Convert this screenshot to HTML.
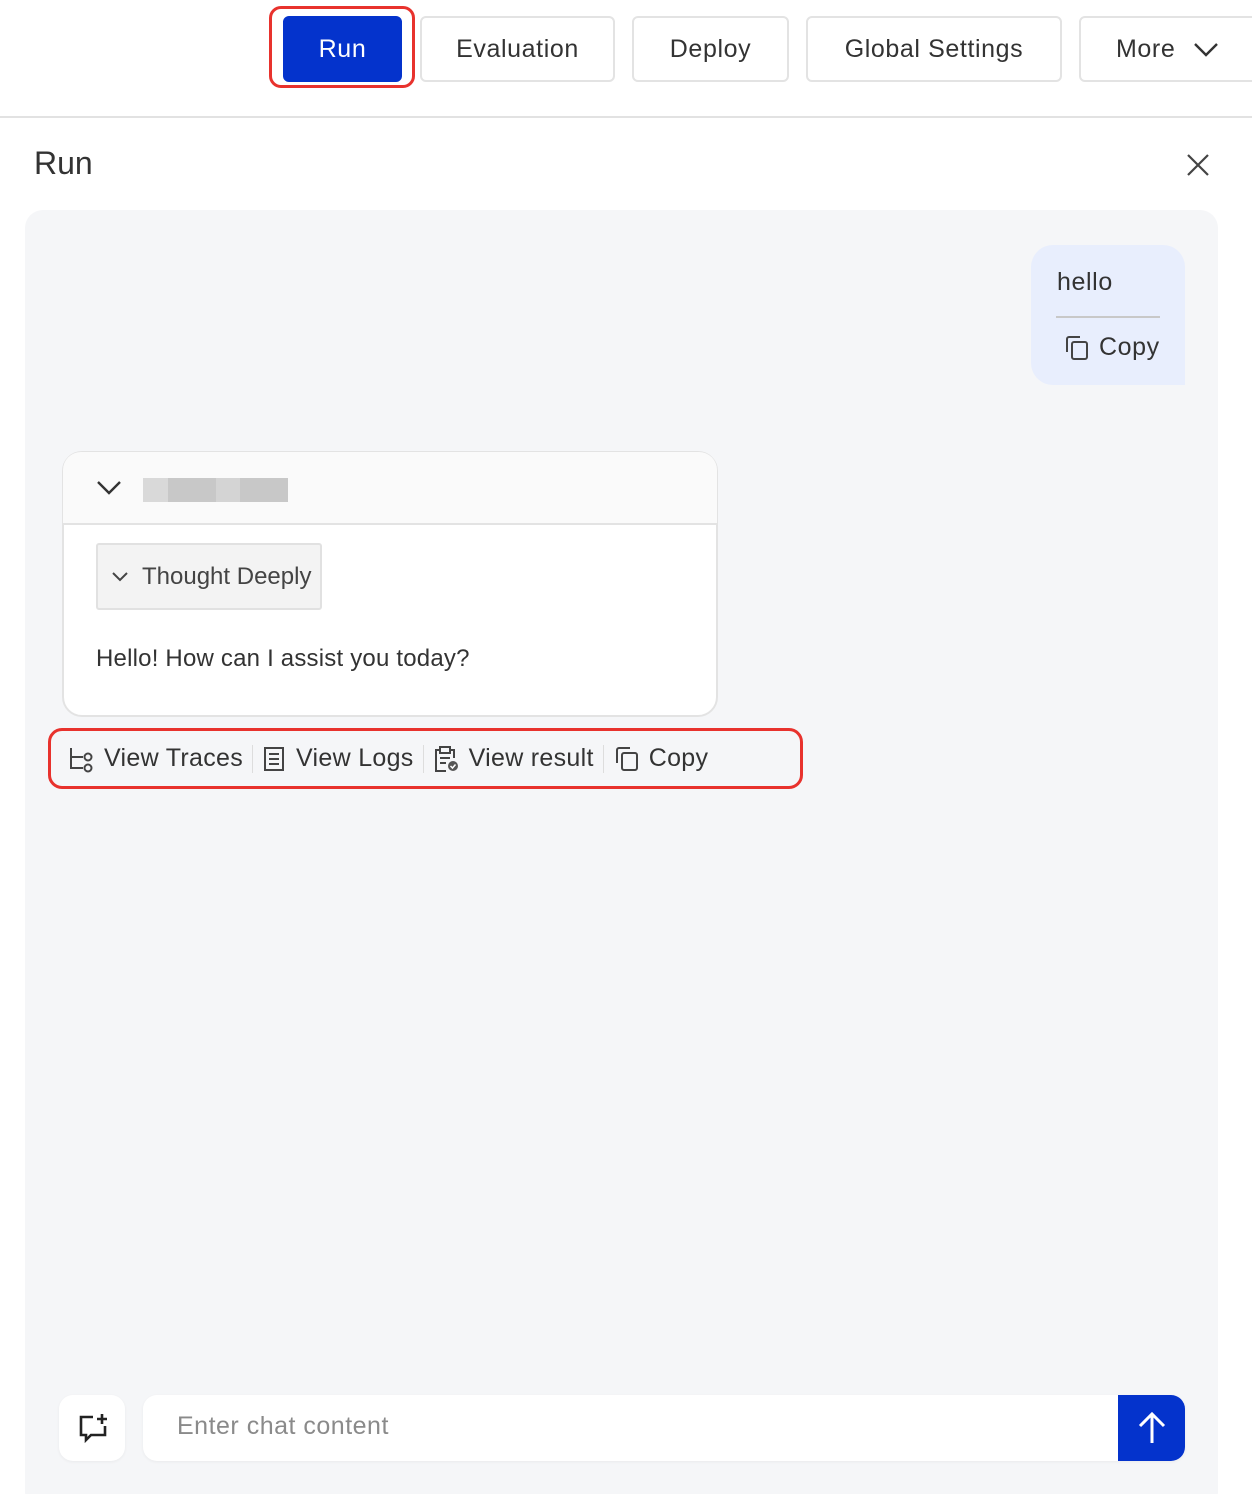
<!DOCTYPE html>
<html><head><meta charset="utf-8"><style>
*{box-sizing:border-box;margin:0;padding:0}
html,body{width:1252px;height:1494px;background:#fff;font-family:"Liberation Sans",sans-serif;color:#333;overflow:hidden;position:relative}
.abs{position:absolute}
.btn{position:absolute;top:16px;height:66px;border:2px solid #e3e3e3;border-radius:6px;background:#fff;font-size:25px;letter-spacing:0.6px;display:flex;align-items:center;justify-content:center;color:#333}
.sep{position:absolute;top:116px;left:0;width:1252px;height:2px;background:#e2e2e2}
.panel{position:absolute;left:25px;top:210px;width:1193px;height:1300px;background:#f5f6f8;border-radius:18px}
.act{display:flex;align-items:center;font-size:25px;letter-spacing:0.3px;color:#333}
.act svg{margin-right:8px}
.div{width:1px;height:28px;background:#ddd;margin:0 9px}
</style></head><body>
<div class="abs" style="left:269px;top:6px;width:146px;height:82px;border:3px solid #e8322d;border-radius:12px"></div>
<div class="btn" style="left:283px;width:119px;background:#0433cc;border-color:#0433cc;color:#fff">Run</div>
<div class="btn" style="left:420px;width:195px">Evaluation</div>
<div class="btn" style="left:632px;width:157px">Deploy</div>
<div class="btn" style="left:806px;width:256px">Global Settings</div>
<div class="btn" style="left:1079px;width:180px;justify-content:flex-start;padding-left:35px">More<svg width="26" height="18" style="margin-left:18px" viewBox="0 0 26 18"><path d="M2 4l11 11 11-11" fill="none" stroke="#333" stroke-width="2.4"/></svg></div>
<div class="sep"></div>
<div class="abs" style="left:34px;top:145px;font-size:32px;color:#333">Run</div>
<svg class="abs" style="left:1186px;top:153px" width="24" height="24" viewBox="0 0 24 24"><path d="M2 2l20 20M22 2L2 22" stroke="#444" stroke-width="2.2"/></svg>
<div class="panel"></div>
<div class="abs" style="left:1031px;top:245px;width:154px;height:140px;background:#e8eefd;border-radius:22px 22px 0 22px"></div>
<div class="abs" style="left:1057px;top:268px;font-size:25px;letter-spacing:0.6px;color:#333">hello</div>
<div class="abs" style="left:1056px;top:316px;width:104px;height:2px;background:#c8c8c8"></div>
<div class="abs act" style="left:1063px;top:333px;letter-spacing:0.6px"><svg width="28" height="28" viewBox="0 0 28 28"><path d="M4 18V5a2 2 0 0 1 2-2h11" fill="none" stroke="#444" stroke-width="2"/><rect x="9" y="8" width="15" height="17" rx="2" fill="none" stroke="#444" stroke-width="2"/></svg>Copy</div>
<div class="abs" style="left:62px;top:451px;width:656px;height:266px;background:#fff;border:2px solid #e3e3e3;border-radius:20px"></div>
<div class="abs" style="left:63px;top:452px;width:654px;height:73px;background:#fafafa;border-bottom:2px solid #e3e3e3;border-radius:18px 18px 0 0"></div>
<svg class="abs" style="left:96px;top:479px" width="26" height="18" viewBox="0 0 26 18"><path d="M2 3l11 11 11-11" fill="none" stroke="#333" stroke-width="2.4"/></svg>
<div class="abs" style="left:143px;top:478px;width:145px;height:24px;background:#c8c8c8"></div>
<div class="abs" style="left:143px;top:478px;width:25px;height:24px;background:#d9d9d9"></div>
<div class="abs" style="left:216px;top:478px;width:24px;height:24px;background:#d4d4d4"></div>
<div class="abs" style="left:96px;top:543px;width:226px;height:67px;background:#f3f3f3;border:2px solid #e1e1e1;border-radius:3px;display:flex;align-items:center;padding-left:12px;font-size:24px;color:#444"><svg width="20" height="14" viewBox="0 0 20 14" style="margin-right:12px"><path d="M3 3l7 7 7-7" fill="none" stroke="#444" stroke-width="2"/></svg>Thought Deeply</div>
<div class="abs" style="left:96px;top:645px;font-size:24px;letter-spacing:0.2px;color:#333">Hello! How can I assist you today?</div>
<div class="abs" style="left:48px;top:728px;width:755px;height:61px;border:3px solid #e8322d;border-radius:14px"></div>
<div class="abs act" style="left:68px;top:744px">
<svg width="28" height="28" viewBox="0 0 28 28"><path d="M3 3v20h12M3 12h12" fill="none" stroke="#444" stroke-width="2"/><circle cx="20" cy="12" r="3.5" fill="none" stroke="#444" stroke-width="2"/><circle cx="20" cy="23" r="3.5" fill="none" stroke="#444" stroke-width="2"/></svg>View Traces
<div class="div"></div>
<svg width="26" height="28" viewBox="0 0 26 28"><rect x="3" y="3" width="18" height="22" fill="none" stroke="#444" stroke-width="2"/><path d="M7 9h10M7 14h10M7 19h10" stroke="#444" stroke-width="2"/></svg>View Logs
<div class="div"></div>
<svg width="28" height="28" viewBox="0 0 28 28"><path d="M6 5H3v21h10M18 5h3v8" fill="none" stroke="#444" stroke-width="2"/><rect x="7" y="2" width="10" height="6" fill="none" stroke="#444" stroke-width="2"/><path d="M7 13h10M7 18h6" stroke="#444" stroke-width="2"/><circle cx="20" cy="21" r="5" fill="#555"/><path d="M17.5 21l2 2 3-3.5" fill="none" stroke="#fff" stroke-width="1.5"/></svg>View result
<div class="div"></div>
<svg width="28" height="28" viewBox="0 0 28 28"><path d="M4 18V5a2 2 0 0 1 2-2h11" fill="none" stroke="#444" stroke-width="2"/><rect x="9" y="8" width="15" height="17" rx="2" fill="none" stroke="#444" stroke-width="2"/></svg>Copy
</div>
<div class="abs" style="left:59px;top:1395px;width:66px;height:66px;background:#fff;border-radius:14px;box-shadow:0 1px 3px rgba(0,0,0,.05)"></div>
<svg class="abs" style="left:78px;top:1413px" width="32" height="30" viewBox="0 0 32 30"><path d="M15 4H3v18h5v5l5-5h14v-9" fill="none" stroke="#222" stroke-width="2.6"/><path d="M24 1v10M19 6h10" stroke="#222" stroke-width="2.6"/></svg>
<div class="abs" style="left:143px;top:1395px;width:1042px;height:66px;background:#fff;border-radius:14px;box-shadow:0 1px 3px rgba(0,0,0,.05)"></div>
<div class="abs" style="left:177px;top:1412px;font-size:25px;letter-spacing:0.5px;color:#8a8a8a">Enter chat content</div>
<div class="abs" style="left:1118px;top:1395px;width:67px;height:66px;background:#0433cc;border-radius:0 14px 14px 0"></div>
<svg class="abs" style="left:1136px;top:1411px" width="32" height="34" viewBox="0 0 32 34"><path d="M16 32V3M4 15L16 3l12 12" fill="none" stroke="#fff" stroke-width="3"/></svg>
</body></html>
